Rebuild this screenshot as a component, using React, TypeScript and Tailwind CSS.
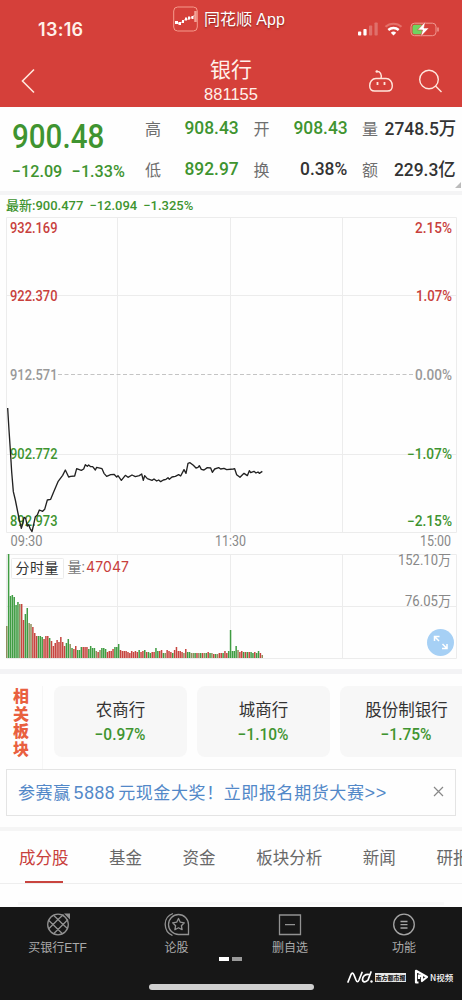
import React from 'react';

const GREEN = '#3f9430';
const RED = '#c8403c';

// [height, color] per minute: g = down, r = up, o = flat
const VOLUMES =
  '32o 104g 62g 63g 61g 53g 56g 54o 54r 38r 44g 50g 35o 34o 31r 25r 22r 22g 22g 21g 19r 22r 22r 20g 17r 12r 15r 18r 16r 21r 16r 12r 15g 19g 14o 10g 9r 12r 8g 8g 11g 11r 11r 11r 9g 12g 10g 10g 7o 6r 8o 10g 10g 9g 6r 7r 7r 9r 11g 11g 14g 8r 7r 7r 7r 6r 5r 7r 6r 7r 6r 8g 6r 7r 8g 6r 6g 5g 6r 6r 10g 7g 7r 8r 5g 5o 8r 7r 6r 5g 8r 11r 7r 7r 6r 5o 9r 6g 6g 5o 5o 5g 5r 5o 5g 5r 5o 5g 6r 5g 5o 4r 4g 4o 5r 5r 5g 7r 5r 7g 28g 7g 7g 12g 8o 6r 7r 6g 6r 6g 6r 6g 5g 6r 5g 7g 5r 3o'
    .split(' ')
    .map((item) => ({ h: parseInt(item), kind: item.slice(-1) }));

const BAR_COLORS: Record<string, string> = { g: '#3f9c42', r: '#c6453f', o: '#8f8f5e' };

const PRICE_LINE =
  '23,24 27,90 31,150 35,215 40,275 46,300 52,330 58,360 64,385 68,372 72,352 77,355 82,378 86,374 90,385 96,395 100,378 106,350 112,345 118,330 128,334 134,328 142,300 152,298 160,278 174,245 188,226 196,210 206,231 212,229 224,228 230,206 244,211 251,207 256,194 262,199 266,195 272,200 278,200 286,210 290,202 306,206 312,220 320,229 332,224 342,223 350,231 354,227 364,241 376,226 384,232 396,225 406,230 418,227 425,222 430,241 434,227 442,236 456,241 462,237 470,243 476,240 482,245 490,240 498,238 504,233 508,238 516,231 526,229 536,224 542,228 552,209 558,220 564,190 570,188 580,196 588,204 594,202 598,197 604,208 612,210 622,203 632,204 637,217 644,207 656,203 662,207 672,205 680,209 700,207 704,206 710,224 720,232 732,220 742,227 748,212 752,218 762,214 768,219 774,216 778,220 787,214';

const Header = () => (
  <header className="h-[107px] bg-[#d5403a] text-[#fff1ea]">
    <div className="relative flex h-[54px] items-start justify-between pl-[38px] pr-[22px]">
      <span className="mt-[19px] font-['Inter'] text-[18px] leading-[21px] font-semibold tracking-[0.3px]">13:16</span>
      <div className="absolute left-[173px] top-[5px] flex items-center gap-[6px]">
        <svg width="25" height="26" viewBox="0 0 25 26" fill="none">
          <rect x="0.7" y="1" width="23.6" height="24" rx="4" stroke="#f59a8c" />
          <path d="M2 16.5h3M5.5 17.5h2.5M9 15.5h2M12 13h2M15 12h2M18.5 11.5h2" stroke="#fff" strokeWidth="3" />
          <path d="M2 17l5 .5 5-4 4-.5 6-4" stroke="#fff" strokeWidth="0.7" />
          <path d="M22.5 5v11" stroke="#f3a398" strokeWidth="2.5" />
        </svg>
        <span className="text-[16px] leading-[26px] tracking-[0.1px] text-white [text-shadow:0_1px_2px_rgba(60,0,0,0.55)]">
          同花顺<span className="ml-[4px] font-['Liberation_Sans']">App</span>
        </span>
      </div>
      <svg className="mt-[20px]" width="84" height="18" viewBox="0 0 84 18" fill="none">
        <g fill="#fff">
          <rect x="2" y="11.5" width="3.2" height="4" rx="0.8" />
          <rect x="7.4" y="9" width="3.2" height="6.5" rx="0.8" />
          <rect x="13" y="5.5" width="3.2" height="10" rx="0.8" opacity="0.25" />
          <rect x="18.5" y="2.5" width="3.2" height="13" rx="0.8" opacity="0.25" />
        </g>
        <path d="M29.5 6.8a12 12 0 0 1 16 0" stroke="#e5716a" strokeWidth="2.2" />
        <path d="M32.3 10a7.8 7.8 0 0 1 10.4 0" stroke="#fff" strokeWidth="2.4" />
        <path d="M34.8 12.7a4 4 0 0 1 5.4 0L37.5 15.5z" fill="#fff" />
        <rect x="55" y="3.2" width="25" height="12.5" rx="3.5" stroke="#f09890" />
        <rect x="56.5" y="4.7" width="10.5" height="9.5" rx="2" fill="#6fd35f" />
        <path d="M69.5 1.5L61.5 10h5l-2 7 8.5-9h-5z" fill="#fff" stroke="#d5403a" strokeWidth="0.6" />
        <path d="M82 7.5v4" stroke="#f09890" strokeWidth="1.5" />
      </svg>
    </div>
    <div className="flex items-start pl-[20px]">
      <svg className="mt-[14px]" width="16" height="26" viewBox="0 0 16 26" fill="none" stroke="#ffe6dc" strokeWidth="1.6">
        <path d="M14 1.5L2.5 13 14 24.5" />
      </svg>
      <div className="ml-[145px] flex w-[100px] flex-col items-center">
        <h1 className="text-[21px] leading-[28px]">银行</h1>
        <span className="mt-px font-['Liberation_Sans'] text-[16.5px] leading-[22px]">881155</span>
      </div>
      <div className="mt-[14px] ml-[87px] flex items-start gap-[24px]">
        <svg width="26" height="26" viewBox="0 0 26 26" fill="none" stroke="#ffe6dc" strokeWidth="1.4">
          <path d="M8 10.500h10c4 0 6.300 3.500 6.300 7.200 0 3.500-2 5.300-5 5.300H6.700c-3 0-5-1.800-5-5.300 0-3.700 2.300-7.200 6.300-7.200z" />
          <path d="M13 10.500C14 6 12 3.500 9.500 3.500" />
          <circle cx="8.800" cy="3.500" r="1.300" fill="#ffe6dc" stroke="none" />
          <path d="M9.500 14v3M16.500 14v3" strokeWidth="1.800" />
        </svg>
        <svg width="25" height="26" viewBox="0 0 25 26" fill="none" stroke="#ffe6dc" strokeWidth="1.4">
          <circle cx="11" cy="11.500" r="9.300" />
          <path d="M17.500 18l6 6" />
        </svg>
      </div>
    </div>
  </header>
);

interface StatProps {
  label: string;
  value: string;
  unit?: string;
  green?: boolean;
}

const Stat: React.FC<StatProps> = ({ label, value, unit, green }) => (
  <div className="flex h-[41px] items-center justify-between whitespace-nowrap">
    <span className="text-[16px] text-[#6e6e6e]">{label}</span>
    <span
      className={`mt-[2px] origin-right scale-x-[0.94] font-['Roboto'] text-[18.5px] font-medium ${green ? 'text-[#3f9430]' : 'text-[#333]'}`}
    >
      {value}
      {unit && <span className="font-['Noto_Sans_CJK_SC']">{unit}</span>}
    </span>
  </div>
);

const Quote = () => (
  <section className="relative flex h-[84px]">
    <div className="w-[145px] pl-[12px] pt-[10px] font-['Roboto'] font-medium text-[#3f9430]">
      <div className="origin-left scale-x-[0.87] text-[34px] leading-[38px]">900.48</div>
      <div className="mt-[4px] flex origin-left scale-x-[0.95] gap-[10px] text-[17px] leading-[24px] whitespace-nowrap">
        <span>−12.09</span>
        <span>−1.33%</span>
      </div>
    </div>
    <div className="grid h-[82px] grid-cols-[94px_94px_94px] gap-x-[14.500px]">
      <Stat label="高" value="908.43" green />
      <Stat label="开" value="908.43" green />
      <Stat label="量" value="2748.5" unit="万" />
      <Stat label="低" value="892.97" green />
      <Stat label="换" value="0.38%" />
      <Stat label="额" value="229.3" unit="亿" />
    </div>
    <svg className="absolute right-px bottom-[3px]" width="6" height="6">
      <path d="M6 0v6H0z" fill="#bbb" />
    </svg>
  </section>
);

interface LabelProps {
  x: number;
  y: number;
  w: number;
  fill: string;
  children: string;
}

const Label: React.FC<LabelProps> = ({ x, y, w, fill, children }) => (
  <text x={x} y={y} textLength={w} lengthAdjust="spacingAndGlyphs" fill={fill}>
    {children}
  </text>
);

const Chart = () => (
  <svg
    className="block font-['Roboto','Noto_Sans_CJK_SC',sans-serif] text-[14px] font-medium"
    width="462"
    height="452"
    viewBox="0 0 462 452"
  >
    <g stroke="#ececec" fill="none">
      <path d="M6.5 .5H456.500V315.500H6.500zM117.500 0V315M230.500 0V315M342.500 0V315M6 78.500H456M6 237.500H456" />
      <path d="M6.500 337.500H456.500V441.500H6.500zM117.500 337V441M230.500 337V441M342.500 337V441M6 389.500H456" />
    </g>
    <path d="M58 157.500H415" stroke="#c4c4c4" strokeDasharray="4 2.500" />
    <Label x={10} y={16} w={47.5} fill={RED}>932.169</Label>
    <Label x={10} y={83.500} w={47.5} fill={RED}>922.370</Label>
    <Label x={10} y={163} w={47.5} fill="#999">912.571</Label>
    <Label x={10} y={242} w={47.5} fill={GREEN}>902.772</Label>
    <Label x={10} y={309} w={47.5} fill={GREEN}>892.973</Label>
    <Label x={415} y={16} w={37} fill={RED}>2.15%</Label>
    <Label x={416} y={83.500} w={36} fill={RED}>1.07%</Label>
    <Label x={415} y={163} w={37} fill="#999">0.00%</Label>
    <Label x={407} y={242} w={45} fill={GREEN}>−1.07%</Label>
    <Label x={407} y={309} w={45} fill={GREEN}>−2.15%</Label>
    <polyline
      points={PRICE_LINE}
      transform="translate(0 183) scale(0.33333)"
      fill="none"
      stroke="#222"
      strokeWidth="4"
      strokeLinejoin="round"
    />
    <g fontWeight="400">
      <Label x={10.5} y={329} w={32} fill="#888">09:30</Label>
      <Label x={215} y={329} w={31} fill="#888">11:30</Label>
      <Label x={420} y={329} w={31} fill="#888">15:00</Label>
    </g>
    {VOLUMES.map((v, i) => (
      <rect key={i} x={6 + i * 1.865} y={441 - v.h} width="1.500" height={v.h} fill={BAR_COLORS[v.kind]} />
    ))}
    <rect x="11.5" y="341.500" width="52" height="20" rx="1" fill="#fff" stroke="#ececec" />
    <g fontSize="14" fontWeight="400">
      <text x="15.5" y="355.500" textLength="43" fill="#333">分时量</text>
      <text x="67.5" y="355" fill="#777">量:</text>
      <text x="86" y="354.500" textLength="43" fontFamily="Inter" fill={RED}>47047</text>
    </g>
    <g fontWeight="400">
      <Label x={398} y={348} w={53} fill="#888">152.10万</Label>
      <Label x={405} y={389} w={46} fill="#888">76.05万</Label>
    </g>
    <circle cx="440.5" cy="425.500" r="13.500" fill="#a6d0f5" />
    <path d="M439 424l-4.500-4.500M434.500 424v-4.500h5M442.500 427l4.500 4.500M447 427v4.500h-5" fill="none" stroke="#fff" strokeWidth="1.500" />
  </svg>
);

const SectorCard = ({ name, change }: { name: string; change: string }) => (
  <div className="flex h-[71px] w-[133px] shrink-0 flex-col items-center rounded-[8px] bg-[#f7f7f7] pt-[11px]">
    <span className="text-[16.5px] leading-[24px] text-[#333]">{name}</span>
    <span className="mt-[2px] scale-x-[0.94] font-['Roboto'] text-[16.5px] leading-[24px] font-medium text-[#3f9430]">{change}</span>
  </div>
);

const Related = () => (
  <section className="flex h-[94px] overflow-hidden pt-[11px]">
    <div className="flex w-[43px] shrink-0 items-start justify-center border-r border-[#f6f6f6] pt-[2px] text-[16px] leading-[20px] font-black tracking-[1.500px] text-[#e9603f]">
      <span className="[writing-mode:vertical-rl]">相关板块</span>
    </div>
    <div className="ml-[11px] flex gap-[10px]">
      <SectorCard name="农商行" change="−0.97%" />
      <SectorCard name="城商行" change="−1.10%" />
      <SectorCard name="股份制银行" change="−1.75%" />
    </div>
  </section>
);

const Banner = () => (
  <div className="mx-[6px] flex h-[47px] items-center justify-between border border-[#e4e4e4] pr-[11px] pl-[11px]">
    <span className="text-[17px] tracking-[0.600px] whitespace-nowrap text-[#5288c8]">
      参赛赢<span className="mx-[3px] font-['Liberation_Sans'] text-[17.5px] tracking-[0.600px]">5888</span>元现金大奖！立即报名期货大赛
      <span className="font-['Liberation_Sans'] text-[18px]">&gt;&gt;</span>
    </span>
    <svg className="-mt-[2px]" width="11" height="11" viewBox="0 0 11 11" stroke="#888" strokeWidth="1.2">
      <path d="M1 1l9 9M10 1l-9 9" />
    </svg>
  </div>
);

const TABS = ['基金', '资金', '板块分析', '新闻', '研报'];

const Tabs = () => (
  <nav className="flex h-[53px] overflow-hidden border-b border-[#eee] pl-[19px] text-[16.5px] leading-[24px] whitespace-nowrap text-[#686868]">
    <div className="mr-[40.500px] flex shrink-0 flex-col items-center text-[#c8403c]">
      <span className="mt-[14px]">成分股</span>
      <span className="mt-[12px] h-[3px] w-[38px] bg-[#c9443f]" />
    </div>
    <div className="flex gap-[40.600px] pt-[14px]">
      {TABS.map((tab) => (
        <span key={tab}>{tab}</span>
      ))}
    </div>
  </nav>
);

const EtfIcon = () => (
  <svg width="24" height="24" viewBox="0 0 24 24" fill="none" stroke="#929292" strokeWidth="1.3">
    <circle cx="12" cy="12.5" r="10.300" />
    <path d="M12 7.500l5 5-5 5-5-5zM12 7.500L7.500 3.200M7 12.500L2.800 8.500M17 12.500l4.500 4M12 17.500l4.500 4.300M17 12.500l5-5M12 7.500l5.500-5M7 12.500l-4.500 4.500M12 17.500l-4.500 4.300" />
    <path d="M18 1.500h6v6z" fill="#929292" stroke="none" />
  </svg>
);

const ForumIcon = () => (
  <svg width="26" height="24" viewBox="0 0 26 24" fill="none" stroke="#929292" strokeWidth="1.3">
    <path d="M9 1.500Q1 4.500 1.200 12.500T8.500 23.500" />
    <path d="M14.500 22.500h10V12.500a10 10 0 1 0-10 10z" />
    <path d="M14.500 6.500l1.800 3.700 4 .6-2.900 2.900.7 4-3.600-1.900-3.600 1.900.7-4-2.900-2.900 4-.6z" strokeLinejoin="round" />
  </svg>
);

const RemoveIcon = () => (
  <svg width="24" height="24" viewBox="0 0 24 24" fill="none" stroke="#929292" strokeWidth="1.3">
    <path d="M1.500 3h21v19.500h-21zM7 12.700h10" />
  </svg>
);

const MenuIcon = () => (
  <svg width="24" height="24" viewBox="0 0 24 24" fill="none" stroke="#a5a5a5" strokeWidth="1.3">
    <circle cx="12" cy="12.5" r="10.300" />
    <path d="M8.500 9.500h7M8.500 12.700h7M8.500 16h7" />
  </svg>
);

const BottomItem = ({ icon, label }: { icon: React.ReactNode; label: string }) => (
  <div className="flex flex-col items-center">
    {icon}
    <span className="mt-[3px] font-['Liberation_Sans','Noto_Sans_CJK_SC'] text-[12px] leading-[18px] text-[#aaa]">{label}</span>
  </div>
);

const BottomBar = () => (
  <footer className="relative h-[93px] bg-[#171717] pt-[5px]">
    <div className="grid grid-cols-[115px_123px_104px_124px]">
      <BottomItem icon={<EtfIcon />} label="买银行ETF" />
      <BottomItem icon={<ForumIcon />} label="论股" />
      <BottomItem icon={<RemoveIcon />} label="删自选" />
      <BottomItem icon={<MenuIcon />} label="功能" />
    </div>
    <div className="absolute top-[50px] left-[219px] flex gap-[3px]">
      <span className="h-[4px] w-[10px] bg-white" />
      <span className="h-[4px] w-[10px] bg-[#9a9a9a]" />
    </div>
    <div className="absolute top-[77px] left-[149px] h-[6px] w-[165px] rounded-full bg-[#cfcfcf]" />
    <div className="absolute top-[60px] left-[347px] flex h-[20px] items-center text-white">
      <svg width="27" height="14" viewBox="0 0 27 14" fill="none" stroke="#fff" strokeWidth="1.7" strokeLinecap="round">
        <path d="M1 12L4 4.500Q5.500 1.500 7 5l2 5q1.500 3.500 3 0L15 2.500" />
        <path d="M22 4.500c-4-.5-6.500 2-6.500 5 0 3 3.500 3 5.500.5l3-8" />
        <circle cx="24.5" cy="11.500" r="1.200" fill="#fff" stroke="none" />
      </svg>
      <span className="ml-px flex h-[9px] w-[31px] items-center justify-center bg-[#e8e8e8] text-[6px] leading-[9px] font-black whitespace-nowrap text-[#222]">
        南方都市报
      </span>
      <svg className="ml-[8px]" width="15" height="16" viewBox="0 0 15 16" fill="none" stroke="#fff" strokeWidth="2.2" strokeLinejoin="round">
        <path d="M4.500 13.500H2V1.800L13 8 8 12V7.500L5 6.500V10" />
      </svg>
      <span className="ml-px text-[8.5px] leading-[12px] font-medium whitespace-nowrap">N视频</span>
    </div>
  </footer>
);

export default function App() {
  return (
    <div className="h-[1000px] w-[462px] overflow-hidden bg-[#fefefe] font-['Noto_Sans_CJK_SC',sans-serif]">
      <Header />
      <Quote />
      <div className="h-[4px] bg-[#f4f4f5]" />
      <div className="flex h-[22px] items-center gap-[6px] pl-[6px] font-['Roboto','Noto_Sans_CJK_SC'] text-[13px] font-medium text-[#3f9430]">
        <span>最新:900.477</span>
        <span>−12.094</span>
        <span>−1.325%</span>
      </div>
      <Chart />
      <div className="h-[5px] bg-[#f3f3f5]" />
      <div className="h-px" />
      <Related />
      <Banner />
      <div className="mt-[11px] h-[4px] bg-[#f5f5f5]" />
      <Tabs />
      <div className="h-[23px] pt-[18px]">
        <div className="mx-[18px] h-[3px] bg-[#f9f9f9]" />
      </div>
      <BottomBar />
    </div>
  );
}
